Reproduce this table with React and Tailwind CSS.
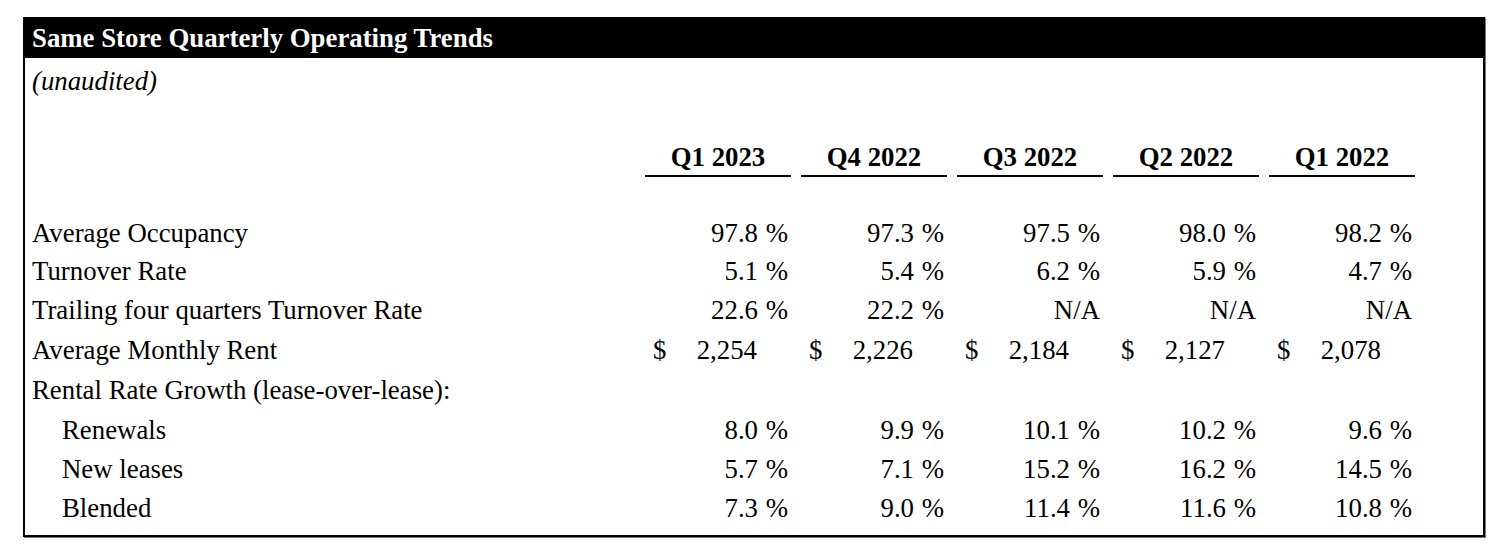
import React from "react";

const cols = ["Q1 2023", "Q4 2022", "Q3 2022", "Q2 2022", "Q1 2022"];

const rows = [
  { label: "Average Occupancy", h: "h-[38px]", type: "pct", vals: ["97.8", "97.3", "97.5", "98.0", "98.2"] },
  { label: "Turnover Rate", h: "h-[38px]", type: "pct", vals: ["5.1", "5.4", "6.2", "5.9", "4.7"] },
  { label: "Trailing four quarters Turnover Rate", h: "h-[40px]", type: "mixed", vals: ["22.6", "22.2", "N/A", "N/A", "N/A"] },
  { label: "Average Monthly Rent", h: "h-[40px]", type: "usd", vals: ["2,254", "2,226", "2,184", "2,127", "2,078"] },
  { label: "Rental Rate Growth (lease-over-lease):", h: "h-[40px]", type: "none", vals: [] },
  { label: "Renewals", indent: true, h: "h-[40px]", type: "pct", vals: ["8.0", "9.9", "10.1", "10.2", "9.6"] },
  { label: "New leases", indent: true, h: "h-[39px]", type: "pct", vals: ["5.7", "7.1", "15.2", "16.2", "14.5"] },
  { label: "Blended", indent: true, h: "h-[38px]", type: "pct", vals: ["7.3", "9.0", "11.4", "11.6", "10.8"] },
];

function Cell({ type, v }) {
  if (type === "usd") {
    return (
      <div className="w-[146px] flex justify-between pl-[8px] pr-[34px]">
        <span>$</span>
        <span>{v}</span>
      </div>
    );
  }
  if (v === "N/A") {
    return <div className="w-[146px] text-right pr-[3px]">N/A</div>;
  }
  return (
    <div className="w-[146px] flex justify-end">
      <span>{v}</span>
      <span className="w-[33px] text-right pr-[3px]">%</span>
    </div>
  );
}

export default function App() {
  return (
    <div className="w-[1498px] h-[550px] bg-white pt-[17px] pl-[23px]" style={{ fontFamily: '"Liberation Serif", "Times New Roman", serif' }}>
      <div className="w-[1462px] h-[520px] border-2 border-black shadow-[1px_1px_0_#777] text-black text-[26.8px] leading-none">
        <div className="h-[39px] bg-black text-white font-bold flex items-center pl-[7px]">
          Same Store Quarterly Operating Trends
        </div>
        <div className="h-[46px] flex items-center pl-[7px] italic">(unaudited)</div>
        <div className="flex pl-[620px] mt-[39px] gap-[10px]">
          {cols.map((c) => (
            <div key={c} className="w-[146px] h-[34px] border-b-2 border-black font-bold flex items-center justify-center pb-[3px]">
              {c}
            </div>
          ))}
        </div>
        <div className="mt-[37px] flex flex-col">
          {rows.map((r) => (
            <div key={r.label} className={`${r.h} flex items-center`}>
              <div className={`w-[620px] shrink-0 ${r.indent ? "pl-[37px]" : "pl-[7px]"}`}>{r.label}</div>
              <div className="flex gap-[10px]">
                {r.vals.map((v, i) => (
                  <Cell key={i} type={r.type} v={v} />
                ))}
              </div>
            </div>
          ))}
        </div>
      </div>
    </div>
  );
}
